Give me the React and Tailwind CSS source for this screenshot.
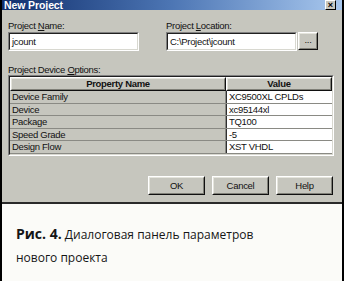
import React from 'react';

const rows = [
    ['Device Family', 'XC9500XL CPLDs'],
    ['Device', 'xc95144xl'],
    ['Package', 'TQ100'],
    ['Speed Grade', '-5'],
    ['Design Flow', 'XST VHDL'],
];

function Sunken({ className, children }) {
    return (
        <div className={`border border-t-[#808080] border-l-[#808080] border-b-white border-r-white ${className}`}>
            <div className="h-full border border-t-[#202020] border-l-[#202020] border-b-[#d8d8d0] border-r-[#d8d8d0] bg-white flex items-center px-[2px]">
                {children}
            </div>
        </div>
    );
}

function Button({ children, className }) {
    return (
        <div className={`border border-t-white border-l-white border-b-[#101010] border-r-[#101010] ${className}`}>
            <div className="h-full border border-t-[#e4e4dc] border-l-[#e4e4dc] border-b-[#808078] border-r-[#808078] flex items-center justify-center">
                {children}
            </div>
        </div>
    );
}

export default function App() {
    return (
        <div className="w-[344px] h-[281px] overflow-hidden bg-[#fbfbf8] border-l-2 border-r-2 border-black flex flex-col" style={{ fontFamily: '"Liberation Sans", Arial, sans-serif' }}>
            {/* title bar */}
            <div className="h-[10px] shrink-0 bg-gradient-to-r from-[#12306e] via-[#4d76b4] to-[#a9c8ee] flex items-center justify-between pl-[2px] pr-[6px]">
                <span className="text-white font-bold text-[10.5px] leading-[10px] tracking-[-0.1px]">New Project</span>
                <div className="w-[11px] h-[10px] bg-[#c8c8c0] border border-t-white border-l-white border-b-black border-r-black flex items-center justify-center text-[9px] font-bold leading-none text-black">×</div>
            </div>

            {/* dialog body */}
            <div className="h-[194px] shrink-0 bg-[#c6c6be] border-b-2 border-[#2a2a2a] pl-[6px] pr-[8px] pt-[11px] text-[9.5px] tracking-[-0.3px] text-[#111] leading-none">
                <div className="flex">
                    <div className="w-[131px] flex flex-col gap-[3px]">
                        <span className="h-[8px]">Project <u>N</u>ame:</span>
                        <Sunken className="h-[19px]">jcount</Sunken>
                    </div>
                    <div className="ml-[27px] flex flex-col gap-[3px]">
                        <span className="h-[8px]">Project <u>L</u>ocation:</span>
                        <div className="flex">
                            <Sunken className="h-[19px] w-[131px]">C:\Project\jcount</Sunken>
                            <Button className="h-[18px] w-[20px] ml-[1px] bg-[#c6c6be]">
                                <span className="-mt-[3px]">...</span>
                            </Button>
                        </div>
                    </div>
                </div>

                <div className="mt-[14px] h-[9px]">Project Device <u>O</u>ptions:</div>

                <div className="mt-[1px] border border-t-[#808080] border-l-[#808080] border-b-white border-r-white">
                    <div className="border border-t-[#202020] border-l-[#202020] border-b-[#d8d8d0] border-r-[#d8d8d0]">
                        <div className="flex h-[14px]">
                            <Button className="w-[216px] h-full font-bold">Property Name</Button>
                            <Button className="flex-1 h-full font-bold">Value</Button>
                        </div>
                        {rows.map(([name, value]) => (
                            <div key={name} className="flex h-[12.6px] border-b border-[#8a8a84]">
                                <div className="w-[216px] pl-[2px] flex items-center border-r border-[#8a8a84]">{name}</div>
                                <div className="flex-1 bg-white pl-[2px] flex items-center border-l border-[#303030]">{value}</div>
                            </div>
                        ))}
                    </div>
                </div>

                <div className="mt-[20px] flex justify-end gap-[7px] pr-[1px]">
                    <Button className="w-[57px] h-[19px]">OK</Button>
                    <Button className="w-[57px] h-[19px]">Cancel</Button>
                    <Button className="w-[57px] h-[19px]">Help</Button>
                </div>
            </div>

            {/* caption */}
            <div className="pl-[14px] pt-[18px] text-[12px] leading-[23px] text-[#151515]" style={{ fontFamily: '"Open Sans", "Noto Sans", sans-serif' }}>
                <p><b className="text-[14px]">Рис. 4.</b> Диалоговая панель параметров</p>
                <p>нового проекта</p>
            </div>
        </div>
    );
}
